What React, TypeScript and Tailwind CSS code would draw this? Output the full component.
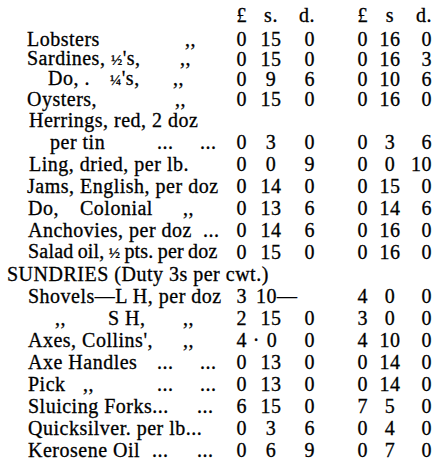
import React from "react";

type Part = [string, React.ReactNode];

interface Row {
  parts: Part[];
  v?: React.ReactNode[];
  h: string;
  merge?: boolean;
}

const cellCls = [
  "w-[22px] justify-end",
  "w-[48px] justify-center",
  "w-[20px] justify-end",
  "w-[53px] justify-end",
  "w-[44px] justify-center",
  "w-[20px] justify-end",
];

const half = <span className="text-[15px]">½</span>;
const quarter = <span className="text-[15px]">¼</span>;

const rows: Row[] = [
  { h: "h-[20px]", parts: [["ml-[27px] w-[158px]", "Lobsters"], ["", ",,"]], v: ["0", "15", "0", "0", "16", "0"] },
  { h: "h-[20px]", parts: [["ml-[27px] w-[153px]", <>Sardines, {half}'s,</>], ["", ",,"]], v: ["0", "15", "0", "0", "16", "3"] },
  { h: "h-[20px]", parts: [["ml-[48px] w-[62px]", "Do, ."], ["w-[63px]", <>{quarter}'s,</>], ["", ",,"]], v: ["0", "9", "6", "0", "10", "6"] },
  { h: "h-[20px]", parts: [["ml-[27px] w-[148px]", "Oysters,"], ["", ",,"]], v: ["0", "15", "0", "0", "16", "0"] },
  { h: "h-[22px]", parts: [["ml-[29px]", "Herrings, red, 2 doz"]] },
  { h: "h-[22px]", parts: [["ml-[50px] w-[107px]", "per tin"], ["w-[43px]", "..."], ["", "..."]], v: ["0", "3", "0", "0", "3", "6"] },
  { h: "h-[22px]", parts: [["ml-[29px]", "Ling, dried, per lb."]], v: ["0", "0", "9", "0", "0", "10"] },
  { h: "h-[22px]", parts: [["ml-[27px]", "Jams, English, per doz"]], v: ["0", "14", "0", "0", "15", "0"] },
  { h: "h-[22px]", parts: [["ml-[28px] w-[52px]", "Do,"], ["w-[103px]", "Colonial"], ["", ",,"]], v: ["0", "13", "6", "0", "14", "6"] },
  { h: "h-[22px]", parts: [["ml-[28px] w-[175px]", "Anchovies, per doz"], ["", "..."]], v: ["0", "14", "6", "0", "16", "0"] },
  {
    h: "h-[22px]",
    parts: [["ml-[28px] tracking-[0.2px] [word-spacing:-1px]", <>Salad oil, {half} pts. per doz</>]],
    v: ["0", "15", "0", "0", "16", "0"],
  },
  { h: "h-[22px]", parts: [["ml-[7px]", "SUNDRIES (Duty 3s per cwt.)"]] },
  { h: "h-[22px]", parts: [["ml-[28px]", "Shovels—L H, per doz"]], v: ["3", "10—", "", "4", "0", "0"], merge: true },
  { h: "h-[22px]", parts: [["ml-[55px] w-[53px]", ",,"], ["w-[75px]", "S H,"], ["", ",,"]], v: ["2", "15", "0", "3", "0", "0"] },
  {
    h: "h-[22px]",
    parts: [["ml-[28px] w-[155px]", "Axes, Collins',"], ["", ",,"]],
    v: ["4", <><span className="-ml-[12px] mr-[7px]">·</span>0</>, "0", "4", "10", "0"],
  },
  { h: "h-[22px]", parts: [["ml-[28px] w-[129px]", "Axe Handles"], ["w-[43px]", "..."], ["", "..."]], v: ["0", "13", "0", "0", "14", "0"] },
  { h: "h-[22px]", parts: [["ml-[28px] w-[55px]", "Pick"], ["w-[74px]", ",,"], ["w-[43px]", "..."], ["", "..."]], v: ["0", "13", "0", "0", "14", "0"] },
  { h: "h-[22px]", parts: [["ml-[28px] w-[169px]", "Sluicing Forks..."], ["", "..."]], v: ["6", "15", "0", "7", "5", "0"] },
  { h: "h-[22px]", parts: [["ml-[28px]", "Quicksilver. per lb..."]], v: ["0", "3", "6", "0", "4", "0"] },
  { h: "h-[22px]", parts: [["ml-[28px] w-[124px]", "Kerosene Oil"], ["w-[45px]", "..."], ["", "..."]], v: ["0", "6", "9", "0", "7", "0"] },
];

function Cells({ v, merge }: { v: React.ReactNode[]; merge?: boolean }) {
  return (
    <>
      {v.map((x, i) => {
        if (merge && i === 2) return null;
        if (merge && i === 1)
          return (
            <div key={i} className="w-[68px] flex pl-[9px]">
              {x}
            </div>
          );
        return (
          <div key={i} className={`flex ${cellCls[i]}`}>
            {x}
          </div>
        );
      })}
    </>
  );
}

function PriceRow({ row }: { row: Row }) {
  const wide = !row.v;
  return (
    <div className={`flex items-center ${row.h}`}>
      <div className={`flex shrink-0 whitespace-nowrap ${wide ? "w-full" : "w-[225px]"}`}>
        {row.parts.map(([cls, text], i) => (
          <span key={i} className={`inline-block shrink-0 ${cls}`}>
            {text}
          </span>
        ))}
      </div>
      {row.v && <Cells v={row.v} merge={row.merge} />}
    </div>
  );
}

export default function App() {
  return (
    <div
      className="w-[439px] h-[469px] bg-white text-black text-[20px] tracking-[0.5px] pt-[4px] overflow-hidden [-webkit-text-stroke:0.3px_black]"
      style={{ fontFamily: '"Liberation Serif", serif' }}
    >
      <div className="flex items-center h-[22px] leading-[22px]">
        <div className="w-[225px] shrink-0" />
        <Cells v={["£", "s.", "d.", "£", "s", "d."]} />
      </div>
      <div className="mt-[3px] leading-[20px]">
        {rows.map((r, i) => (
          <PriceRow key={i} row={r} />
        ))}
      </div>
    </div>
  );
}
